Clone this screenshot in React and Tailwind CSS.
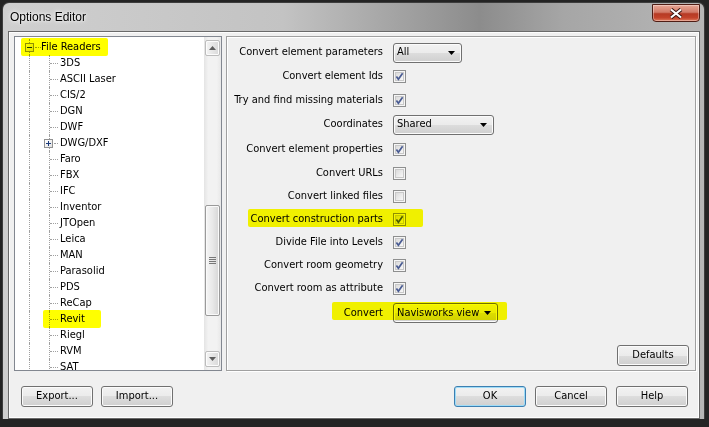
import React from 'react'

const FONT = { fontFamily: '"DejaVu Sans Condensed", "Liberation Sans", sans-serif' }

const items = [
  '3DS', 'ASCII Laser', 'CIS/2', 'DGN', 'DWF', 'DWG/DXF', 'Faro', 'FBX', 'IFC', 'Inventor',
  'JTOpen', 'Leica', 'MAN', 'Parasolid', 'PDS', 'ReCap', 'Revit', 'Riegl', 'RVM', 'SAT',
]

const rows = [
  { label: 'Convert element parameters', combo: 'All', w: 'w-[69px]', h: 'h-[23px]' },
  { label: 'Convert element Ids', check: true, h: 'h-[24px]' },
  { label: 'Try and find missing materials', check: true, h: 'h-[24px]' },
  { label: 'Coordinates', combo: 'Shared', w: 'w-[101px]', h: 'h-[25px]' },
  { label: 'Convert element properties', check: true, h: 'h-[24px]' },
  { label: 'Convert URLs', check: false, h: 'h-[24px]' },
  { label: 'Convert linked files', check: false, h: 'h-[23px]' },
  { label: 'Convert construction parts', check: true, h: 'h-[23px]' },
  { label: 'Divide File into Levels', check: true, h: 'h-[23px]' },
  { label: 'Convert room geometry', check: true, h: 'h-[23px]' },
  { label: 'Convert room as attribute', check: true, h: 'h-[23px]' },
  { label: 'Convert', combo: 'Navisworks view', w: 'w-[105px]', h: 'h-[26px]' },
]

const btn =
  'flex h-[21px] w-[72px] items-center justify-center rounded-[3px] border border-[#707070] bg-[linear-gradient(to_bottom,#f2f2f2_0%,#ebebeb_50%,#dddddd_50%,#cfcfcf_100%)] shadow-[inset_0_0_0_1px_#fbfbfb] text-[11px] text-black'

function Check({ checked }) {
  return (
    <svg width="13" height="13" viewBox="0 0 13 13">
      <defs>
        <linearGradient id="cbx" x1="0" y1="0" x2="1" y2="1">
          <stop offset="0" stopColor="#d9d9d9" />
          <stop offset="1" stopColor="#fafafa" />
        </linearGradient>
      </defs>
      <rect x="0.5" y="0.5" width="12" height="12" fill="#f6f6f6" stroke="#8e8f8f" />
      <rect x="2.5" y="2.5" width="8" height="8" fill="url(#cbx)" stroke="#c9c9c9" />
      {checked && <path d="M3.4 6.4 L5.4 9.2 L9.6 3.2" fill="none" stroke="#4a5c93" strokeWidth="1.7" />}
    </svg>
  )
}

function Combo({ value, w }) {
  return (
    <div
      className={`${w} flex h-[20px] items-center justify-between rounded-[3px] border border-[#707070] bg-[linear-gradient(to_bottom,#f2f2f2_0%,#ebebeb_50%,#dddddd_50%,#cfcfcf_100%)] pl-[3px] pr-[6px] shadow-[inset_0_0_0_1px_#fbfbfb]`}
    >
      <span className="text-[11px] text-black">{value}</span>
      <svg width="7" height="4" viewBox="0 0 7 4">
        <path d="M0 0H7L3.5 4Z" fill="#000" />
      </svg>
    </div>
  )
}

function Box({ plus }) {
  return (
    <div className="absolute top-[4px] flex h-[9px] w-[9px] items-center justify-center border border-[#919191] bg-[linear-gradient(135deg,#ffffff,#e2e2e2)]">
      <svg width="7" height="7" viewBox="0 0 7 7">
        <path d="M1 3.5H6" stroke="#1c3b7b" strokeWidth="1" />
        {plus && <path d="M3.5 1V6" stroke="#1c3b7b" strokeWidth="1" />}
      </svg>
    </div>
  )
}

function Arrow({ up }) {
  return (
    <svg width="7" height="4" viewBox="0 0 7 4">
      <path d={up ? 'M0 4H7L3.5 0Z' : 'M0 0H7L3.5 4Z'} fill="#5d5d5d" />
    </svg>
  )
}

function ScrollButton({ up }) {
  return (
    <div className="flex h-[16px] items-center justify-center rounded-[2px] border border-[#bcbcbc] bg-[linear-gradient(to_right,#f4f4f4,#e6e6e6_50%,#d9d9d9)] shadow-[inset_0_0_0_1px_#fcfcfc]">
      <Arrow up={up} />
    </div>
  )
}

function Tree() {
  return (
    <div className="relative flex w-[208px] overflow-hidden border border-[#828790] bg-white">
      <div className="relative flex-1 pt-[2px]">
        <div className="relative h-[16px]">
          <span className="absolute left-[14px] top-0 h-full border-l border-dotted border-[#a0a0a0]" />
          <span className="absolute left-[20px] top-[8px] w-[6px] border-t border-dotted border-[#a0a0a0]" />
          <div className="absolute left-[10px] top-0 h-full">
            <Box />
          </div>
          <span className="absolute left-[26px] top-0 flex h-full items-center whitespace-nowrap text-[11px] text-black">
            File Readers
          </span>
        </div>
        {items.map((it) => (
          <div key={it} className="relative h-[16px]">
            <span className="absolute left-[14px] top-0 h-full border-l border-dotted border-[#a0a0a0]" />
            <span className="absolute left-[34px] top-0 h-full border-l border-dotted border-[#a0a0a0]" />
            {it === 'DWG/DXF' ? (
              <>
                <span className="absolute left-[39px] top-[8px] w-[4px] border-t border-dotted border-[#a0a0a0]" />
                <div className="absolute left-[29px] top-0 h-full">
                  <Box plus />
                </div>
              </>
            ) : (
              <span className="absolute left-[35px] top-[8px] w-[8px] border-t border-dotted border-[#a0a0a0]" />
            )}
            <span className="absolute left-[45px] top-0 flex h-full items-center whitespace-nowrap text-[11px] text-black">
              {it}
            </span>
          </div>
        ))}
        <div className="pointer-events-none absolute left-[6px] top-[1px] h-[18px] w-[87px] rounded-[2px] bg-[#ffff00] mix-blend-multiply" />
        <div className="pointer-events-none absolute left-[28px] top-[273px] h-[18px] w-[58px] rounded-[2px] bg-[#ffff00] mix-blend-multiply" />
      </div>
      <div className="flex w-[17px] flex-col bg-[linear-gradient(to_right,#e4e4e4,#f2f2f2_25%,#f2f2f2_75%,#e8e8e8)] px-[1px] pb-[3px] pt-[3px]">
        <ScrollButton up />
        <div className="h-[149px]" />
        <div className="flex h-[111px] flex-col items-center justify-center gap-[1px] rounded-[2px] border border-[#9a9a9a] bg-[linear-gradient(to_right,#f5f5f5,#e9e9e9_50%,#d6d6d6)] shadow-[inset_0_0_0_1px_#fafafa]">
          <span className="h-[1px] w-[7px] bg-[#777]" />
          <span className="h-[1px] w-[7px] bg-[#777]" />
          <span className="h-[1px] w-[7px] bg-[#777]" />
          <span className="h-[1px] w-[7px] bg-[#777]" />
        </div>
        <div className="flex-1" />
        <ScrollButton />
      </div>
    </div>
  )
}

function Options() {
  return (
    <div className="relative flex w-[470px] flex-col border border-[#a0a0a0] bg-[#f0f0f0] pt-[4px] shadow-[inset_1px_1px_0_#ffffff,1px_1px_0_#ffffff]">
      {rows.map((r) => (
        <div key={r.label} className={`${r.h} flex items-center`}>
          <div className="w-[156px] whitespace-nowrap text-right text-[11px] text-black">{r.label}</div>
          <div className="ml-[10px] flex items-center">
            {r.combo ? <Combo value={r.combo} w={r.w} /> : <Check checked={r.check} />}
          </div>
        </div>
      ))}
      <div className="flex-1" />
      <div className="flex justify-end pb-[4px] pr-[6px]">
        <div className={btn}>Defaults</div>
      </div>
      <div className="pointer-events-none absolute left-[21px] top-[172px] h-[18px] w-[175px] rounded-[2px] bg-[#ffff00] mix-blend-multiply" />
      <div className="pointer-events-none absolute left-[105px] top-[265px] h-[18px] w-[175px] rounded-[2px] bg-[#ffff00] mix-blend-multiply" />
    </div>
  )
}

export default function App() {
  return (
    <div className="h-[427px] w-[709px] overflow-hidden bg-[#242424] pl-[2px] pt-[2px]" style={FONT}>
      <div className="flex h-[417px] w-[703px] flex-col rounded-t-[7px] border border-b-0 border-[#3d3d3d] bg-[linear-gradient(to_right,#cfcfcf_0%,#c3c3c3_40%,#8c8c8c_68%,#a6a6a6_80%,#b6b6b6_100%)] pl-[5px] pr-[4px]">
        <div className="flex h-[28px] items-start justify-between">
          <span className="ml-[2px] mt-[5px] text-[12px] text-black [text-shadow:0_0_6px_#ffffff,0_0_3px_#ffffff]" style={{ fontFamily: '"Liberation Sans", sans-serif' }}>
            Options Editor
          </span>
          <div className="mt-[1px] flex h-[18px] w-[48px] items-center justify-center rounded-b-[4px] border border-[#4f1d15] bg-[linear-gradient(to_bottom,#e7a796_0%,#d27a68_45%,#b63a24_55%,#c3432b_80%,#df7b5e_100%)] shadow-[inset_0_0_0_1px_rgba(255,255,255,0.35)]">
            <svg width="14" height="11" viewBox="0 0 14 11">
              <path d="M2 1.5L12 9.5M12 1.5L2 9.5" stroke="#3a1410" strokeWidth="4" />
              <path d="M2 1.5L12 9.5M12 1.5L2 9.5" stroke="#ffffff" strokeWidth="2.2" />
            </svg>
          </div>
        </div>
        <div className="flex h-[388px] w-[692px] flex-col border border-[#6a6a6a] bg-[#f0f0f0] pl-[5px] pr-[3px] pt-[4px] shadow-[inset_0_0_0_1px_#fdfdfd]">
          <div className="flex h-[335px] gap-[4px]">
            <Tree />
            <Options />
          </div>
          <div className="mt-[15px] flex items-center justify-between pl-[7px] pr-[8px]">
            <div className="flex gap-[8px]">
              <div className={btn}>Export...</div>
              <div className={btn}>Import...</div>
            </div>
            <div className="flex gap-[9px]">
              <div className="flex h-[21px] w-[72px] items-center justify-center rounded-[3px] border border-[#3c7fb1] bg-[linear-gradient(to_bottom,#f2f2f2_0%,#ebebeb_50%,#dddddd_50%,#cfcfcf_100%)] text-[11px] text-black shadow-[inset_0_0_0_1px_#9fdcf7]">
                OK
              </div>
              <div className={btn}>Cancel</div>
              <div className={btn}>Help</div>
            </div>
          </div>
        </div>
      </div>
    </div>
  )
}
